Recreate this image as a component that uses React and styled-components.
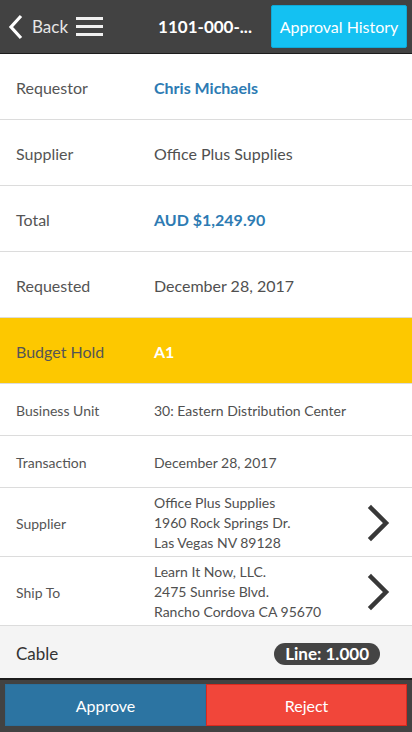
import React from "react";
import styled, { createGlobalStyle } from "styled-components";

const GlobalStyle = createGlobalStyle`
  html, body {
    margin: 0;
    padding: 0;
    overflow: hidden;
    background: #fff;
  }
  body {
    font-family: Lato, "Open Sans", "Liberation Sans", sans-serif;
  }
  * { box-sizing: border-box; }
`;

const Page = styled.div`
  width: 412px;
  height: 732px;
  display: flex;
  flex-direction: column;
`;

const Header = styled.div`
  height: 54px;
  background: #424242;
  border-bottom: 1px solid #1c1c1c;
  display: flex;
  align-items: center;
  padding: 0 5px 0 8px;
  flex-shrink: 0;
`;

const BackButton = styled.div`
  display: flex;
  align-items: center;
  gap: 8px;
  color: #e6e6e6;
  font-size: 17px;
`;

const Menu = styled.div`
  margin-left: 8px;
  width: 27px;
  display: flex;
  flex-direction: column;
  gap: 5px;
  span {
    display: block;
    height: 3px;
    background: #f0f0f0;
  }
`;

const Title = styled.div`
  flex: 1;
  text-align: center;
  color: #fff;
  font-weight: 700;
  font-size: 17px;
  padding-left: 36px;
`;

const HistoryButton = styled.button`
  width: 136px;
  height: 43px;
  background: #14c1f2;
  border: 1px solid #0fa9d8;
  border-radius: 2px;
  color: #fff;
  font-family: inherit;
  font-size: 16px;
  padding: 0;
  margin-top: -1px;
`;

const List = styled.div`
  flex: 1;
  display: flex;
  flex-direction: column;
`;

const Row = styled.div`
  height: ${(p) => p.$h}px;
  flex-shrink: 0;
  display: flex;
  align-items: center;
  padding: 2px 0 0 16px;
  border-bottom: 1px solid #dcdcdc;
  background: ${(p) => (p.$hold ? "#fdc800" : "#fff")};
  font-size: ${(p) => (p.$small ? 14 : 16)}px;
`;

const Label = styled.div`
  width: 138px;
  color: #555;
`;

const Value = styled.div`
  flex: 1;
  color: ${(p) => (p.$blue ? "#2d7bb3" : p.$white ? "#fff" : "#505050")};
  font-weight: ${(p) => (p.$bold ? 700 : 400)};
  line-height: ${(p) => (p.$lines ? "20px" : "normal")};
`;

const Chevron = styled.svg`
  width: 26px;
  height: 40px;
  margin-right: 20px;
`;

const LineRow = styled.div`
  height: 52px;
  background: #f4f4f4;
  display: flex;
  align-items: center;
  justify-content: space-between;
  padding: 3px 32px 0 16px;
  font-size: 17px;
  color: #333;
`;

const Badge = styled.span`
  background: #444;
  color: #fff;
  font-weight: 700;
  font-size: 17px;
  border-radius: 11px;
  padding: 1px 11px;
  line-height: 20px;
`;

const Footer = styled.div`
  height: 54px;
  background: #424242;
  border-top: 2px solid #1c1c1c;
  display: flex;
  padding: 4px 5px 6px 5px;
  flex-shrink: 0;
`;

const ActionButton = styled.button`
  flex: 1;
  border: 1px solid ${(p) => (p.$reject ? "#d92a1f" : "#2a6f9c")};
  background: ${(p) => (p.$reject ? "#f1463a" : "#2c74a2")};
  color: #fff;
  font-family: inherit;
  font-size: 16px;
  padding: 0;
`;

const ArrowRight = () => (
  <Chevron viewBox="0 0 26 40">
    <polyline
      points="5,5 20,20 5,35"
      fill="none"
      stroke="#383838"
      strokeWidth="4.5"
      strokeLinecap="square"
    />
  </Chevron>
);

const App = () => (
  <Page>
    <GlobalStyle />
    <Header>
      <BackButton>
        <svg width="16" height="26" viewBox="0 0 16 26">
          <polyline
            points="13,2 3,13 13,24"
            fill="none"
            stroke="#fff"
            strokeWidth="3.2"
          />
        </svg>
        Back
      </BackButton>
      <Menu>
        <span />
        <span />
        <span />
      </Menu>
      <Title>1101-000-...</Title>
      <HistoryButton>Approval History</HistoryButton>
    </Header>
    <List>
      <Row $h={66}>
        <Label>Requestor</Label>
        <Value $blue $bold>Chris Michaels</Value>
      </Row>
      <Row $h={66}>
        <Label>Supplier</Label>
        <Value>Office Plus Supplies</Value>
      </Row>
      <Row $h={66}>
        <Label>Total</Label>
        <Value $blue $bold>AUD $1,249.90</Value>
      </Row>
      <Row $h={66}>
        <Label>Requested</Label>
        <Value>December 28, 2017</Value>
      </Row>
      <Row $h={66} $hold>
        <Label>Budget Hold</Label>
        <Value $white $bold>A1</Value>
      </Row>
      <Row $h={52} $small>
        <Label>Business Unit</Label>
        <Value>30: Eastern Distribution Center</Value>
      </Row>
      <Row $h={52} $small>
        <Label>Transaction</Label>
        <Value>December 28, 2017</Value>
      </Row>
      <Row $h={69} $small>
        <Label>Supplier</Label>
        <Value $lines>
          Office Plus Supplies
          <br />
          1960 Rock Springs Dr.
          <br />
          Las Vegas NV 89128
        </Value>
        <ArrowRight />
      </Row>
      <Row $h={69} $small>
        <Label>Ship To</Label>
        <Value $lines>
          Learn It Now, LLC.
          <br />
          2475 Sunrise Blvd.
          <br />
          Rancho Cordova CA 95670
        </Value>
        <ArrowRight />
      </Row>
      <LineRow>
        Cable
        <Badge>Line: 1.000</Badge>
      </LineRow>
    </List>
    <Footer>
      <ActionButton>Approve</ActionButton>
      <ActionButton $reject>Reject</ActionButton>
    </Footer>
  </Page>
);

export default App;
